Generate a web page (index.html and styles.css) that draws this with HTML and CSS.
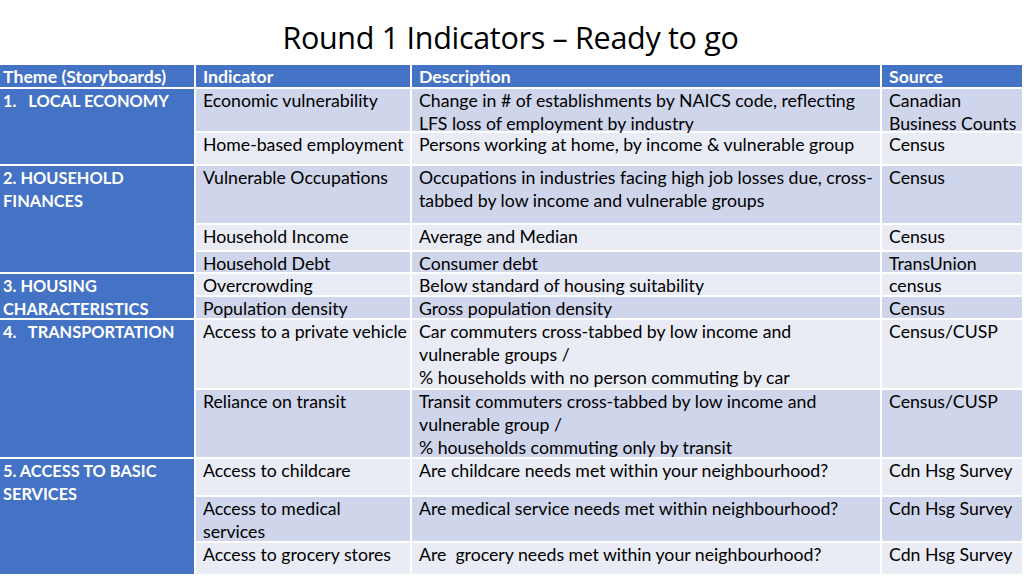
FILE: index.html
```html
<!DOCTYPE html>
<html>
<head>
<meta charset="utf-8">
<link rel="stylesheet" href="styles.css">
</head>
<body>
<div class="slide">
  <h1 class="title">Round 1 Indicators – Ready to go</h1>
  <div class="table">
    <div class="cell head first">Theme (Storyboards)</div>
    <div class="cell head">Indicator</div>
    <div class="cell head">Description</div>
    <div class="cell head">Source</div>

    <div class="cell theme t1">1.&nbsp;&nbsp; LOCAL ECONOMY</div>
    <div class="cell dark">Economic vulnerability</div>
    <div class="cell dark">Change in # of establishments by NAICS code, reflecting<br>LFS loss of employment by industry</div>
    <div class="cell dark">Canadian<br>Business Counts</div>

    <div class="cell light">Home-based employment</div>
    <div class="cell light">Persons working at home, by income &amp; vulnerable group</div>
    <div class="cell light">Census</div>

    <div class="cell theme t2">2. HOUSEHOLD<br>FINANCES</div>
    <div class="cell dark">Vulnerable Occupations</div>
    <div class="cell dark">Occupations in industries facing high job losses due, cross-<br>tabbed by low income and vulnerable groups</div>
    <div class="cell dark">Census</div>

    <div class="cell light">Household Income</div>
    <div class="cell light">Average and Median</div>
    <div class="cell light">Census</div>

    <div class="cell dark">Household Debt</div>
    <div class="cell dark">Consumer debt</div>
    <div class="cell dark">TransUnion</div>

    <div class="cell theme t3">3. HOUSING<br>CHARACTERISTICS</div>
    <div class="cell light">Overcrowding</div>
    <div class="cell light">Below standard of housing suitability</div>
    <div class="cell light">census</div>

    <div class="cell dark">Population density</div>
    <div class="cell dark">Gross population density</div>
    <div class="cell dark">Census</div>

    <div class="cell theme t4">4.&nbsp;&nbsp; TRANSPORTATION</div>
    <div class="cell light">Access to a private vehicle</div>
    <div class="cell light">Car commuters cross-tabbed by low income and<br>vulnerable groups /<br>% households with no person commuting by car</div>
    <div class="cell light">Census/CUSP</div>

    <div class="cell dark">Reliance on transit</div>
    <div class="cell dark">Transit commuters cross-tabbed by low income and<br>vulnerable group /<br>% households commuting only by transit</div>
    <div class="cell dark">Census/CUSP</div>

    <div class="cell theme t5">5. ACCESS TO BASIC<br>SERVICES</div>
    <div class="cell light">Access to childcare</div>
    <div class="cell light">Are childcare needs met within your neighbourhood?</div>
    <div class="cell light">Cdn Hsg Survey</div>

    <div class="cell dark">Access to medical<br>services</div>
    <div class="cell dark">Are medical service needs met within neighbourhood?</div>
    <div class="cell dark">Cdn Hsg Survey</div>

    <div class="cell light">Access to grocery stores</div>
    <div class="cell light">Are&nbsp; grocery needs met within your neighbourhood?</div>
    <div class="cell light">Cdn Hsg Survey</div>
  </div>
</div>
</body>
</html>
```
FILE: styles.css
```css
html, body {
  margin: 0;
  padding: 0;
  background: #ffffff;
}
.slide {
  width: 1024px;
  height: 576px;
  overflow: hidden;
  font-family: Lato, "Open Sans", sans-serif;
  color: #000000;
}
.title {
  margin: 0;
  height: 66px;
  display: flex;
  align-items: center;
  justify-content: center;
  box-sizing: border-box;
  padding: 8px 3px 0 0;
  font-family: "Open Sans", Lato, sans-serif;
  font-weight: 400;
  font-size: 30.5px;
  letter-spacing: -0.3px;
}
.table {
  display: grid;
  grid-template-columns: 194px 214px 468px 140px;
  grid-template-rows: 21px 42px 31px 57px 25px 20px 21px 21px 68px 67px 36px 44px 31px;
  gap: 2px;
  width: 1022px;
  background: #ffffff;
}
.cell {
  font-size: 17.7px;
  line-height: 23px;
  padding: 0 0 0 7px;
  white-space: nowrap;
  overflow: visible;
}
.head {
  background: #4472c4;
  color: #ffffff;
  font-weight: 700;
  margin-top: -1px;
}
.first {
  padding-left: 3px;
}
.theme {
  background: #4472c4;
  color: #ffffff;
  font-weight: 700;
  font-size: 16.4px;
  padding-left: 3px;
  grid-column: 1;
}
.t1 { grid-row: 2 / span 2; }
.t2 { grid-row: 4 / span 3; }
.t3 { grid-row: 7 / span 2; }
.t4 { grid-row: 9 / span 2; }
.t5 { grid-row: 11 / span 3; }
.dark { background: #cfd5ea; }
.light { background: #e9ebf5; }
```
